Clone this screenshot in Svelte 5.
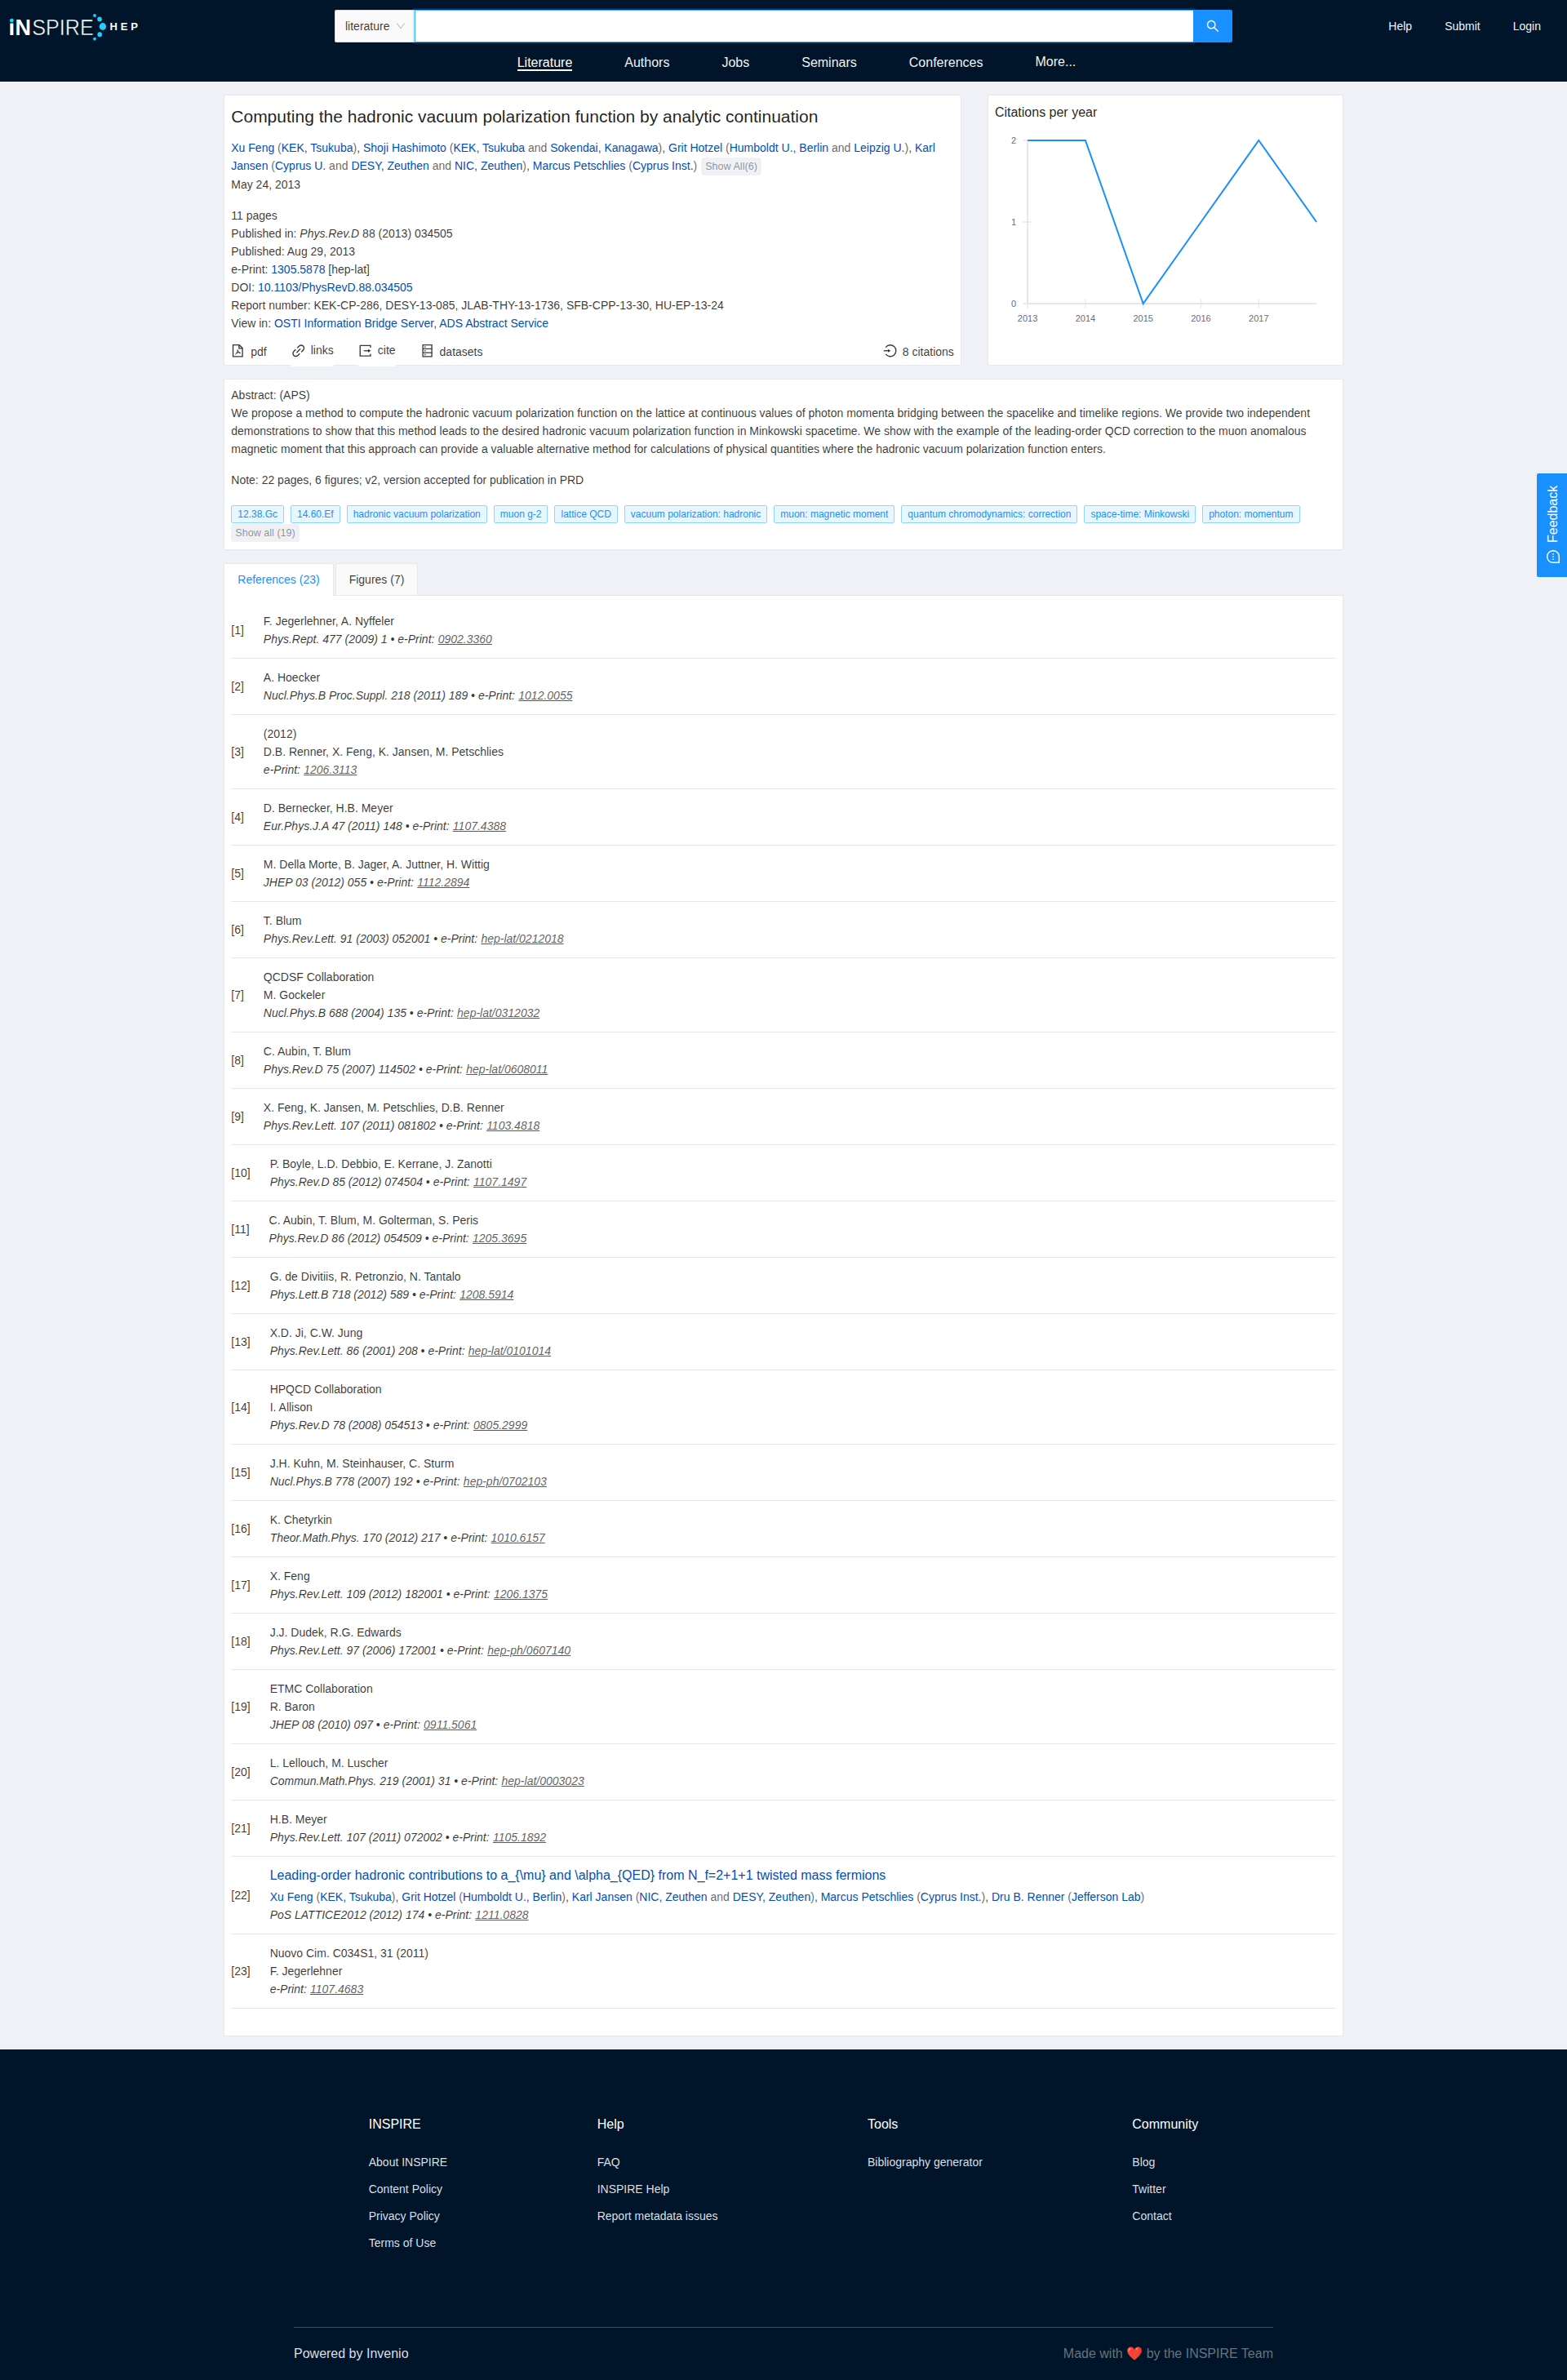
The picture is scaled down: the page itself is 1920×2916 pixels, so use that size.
<script>
  const nav = ['Literature', 'Authors', 'Jobs', 'Seminars', 'Conferences'];
  const account = ['Help', 'Submit', 'Login'];

  const authors = [
    { name: 'Xu Feng', affs: ['KEK, Tsukuba'] },
    { name: 'Shoji Hashimoto', affs: ['KEK, Tsukuba', 'Sokendai, Kanagawa'] },
    { name: 'Grit Hotzel', affs: ['Humboldt U., Berlin', 'Leipzig U.'] },
    { name: 'Karl Jansen', affs: ['Cyprus U.', 'DESY, Zeuthen', 'NIC, Zeuthen'] },
    { name: 'Marcus Petschlies', affs: ['Cyprus Inst.'] }
  ];

  const keywords = [
    '12.38.Gc', '14.60.Ef', 'hadronic vacuum polarization', 'muon g-2', 'lattice QCD',
    'vacuum polarization: hadronic', 'muon: magnetic moment',
    'quantum chromodynamics: correction', 'space-time: Minkowski', 'photon: momentum'
  ];

  const references = [
    { lines: ['F. Jegerlehner, A. Nyffeler'], pub: 'Phys.Rept. 477 (2009) 1', eprint: '0902.3360' },
    { lines: ['A. Hoecker'], pub: 'Nucl.Phys.B Proc.Suppl. 218 (2011) 189', eprint: '1012.0055' },
    { lines: ['(2012)', 'D.B. Renner, X. Feng, K. Jansen, M. Petschlies'], eprint: '1206.3113' },
    { lines: ['D. Bernecker, H.B. Meyer'], pub: 'Eur.Phys.J.A 47 (2011) 148', eprint: '1107.4388' },
    { lines: ['M. Della Morte, B. Jager, A. Juttner, H. Wittig'], pub: 'JHEP 03 (2012) 055', eprint: '1112.2894' },
    { lines: ['T. Blum'], pub: 'Phys.Rev.Lett. 91 (2003) 052001', eprint: 'hep-lat/0212018' },
    { lines: ['QCDSF Collaboration', 'M. Gockeler'], pub: 'Nucl.Phys.B 688 (2004) 135', eprint: 'hep-lat/0312032' },
    { lines: ['C. Aubin, T. Blum'], pub: 'Phys.Rev.D 75 (2007) 114502', eprint: 'hep-lat/0608011' },
    { lines: ['X. Feng, K. Jansen, M. Petschlies, D.B. Renner'], pub: 'Phys.Rev.Lett. 107 (2011) 081802', eprint: '1103.4818' },
    { lines: ['P. Boyle, L.D. Debbio, E. Kerrane, J. Zanotti'], pub: 'Phys.Rev.D 85 (2012) 074504', eprint: '1107.1497' },
    { lines: ['C. Aubin, T. Blum, M. Golterman, S. Peris'], pub: 'Phys.Rev.D 86 (2012) 054509', eprint: '1205.3695' },
    { lines: ['G. de Divitiis, R. Petronzio, N. Tantalo'], pub: 'Phys.Lett.B 718 (2012) 589', eprint: '1208.5914' },
    { lines: ['X.D. Ji, C.W. Jung'], pub: 'Phys.Rev.Lett. 86 (2001) 208', eprint: 'hep-lat/0101014' },
    { lines: ['HPQCD Collaboration', 'I. Allison'], pub: 'Phys.Rev.D 78 (2008) 054513', eprint: '0805.2999' },
    { lines: ['J.H. Kuhn, M. Steinhauser, C. Sturm'], pub: 'Nucl.Phys.B 778 (2007) 192', eprint: 'hep-ph/0702103' },
    { lines: ['K. Chetyrkin'], pub: 'Theor.Math.Phys. 170 (2012) 217', eprint: '1010.6157' },
    { lines: ['X. Feng'], pub: 'Phys.Rev.Lett. 109 (2012) 182001', eprint: '1206.1375' },
    { lines: ['J.J. Dudek, R.G. Edwards'], pub: 'Phys.Rev.Lett. 97 (2006) 172001', eprint: 'hep-ph/0607140' },
    { lines: ['ETMC Collaboration', 'R. Baron'], pub: 'JHEP 08 (2010) 097', eprint: '0911.5061' },
    { lines: ['L. Lellouch, M. Luscher'], pub: 'Commun.Math.Phys. 219 (2001) 31', eprint: 'hep-lat/0003023' },
    { lines: ['H.B. Meyer'], pub: 'Phys.Rev.Lett. 107 (2011) 072002', eprint: '1105.1892' },
    {
      title: 'Leading-order hadronic contributions to a_{\\mu} and \\alpha_{QED} from N_f=2+1+1 twisted mass fermions',
      authors: [
        { name: 'Xu Feng', affs: ['KEK, Tsukuba'] },
        { name: 'Grit Hotzel', affs: ['Humboldt U., Berlin'] },
        { name: 'Karl Jansen', affs: ['NIC, Zeuthen', 'DESY, Zeuthen'] },
        { name: 'Marcus Petschlies', affs: ['Cyprus Inst.'] },
        { name: 'Dru B. Renner', affs: ['Jefferson Lab'] }
      ],
      lines: [],
      pub: 'PoS LATTICE2012 (2012) 174',
      eprint: '1211.0828'
    },
    { lines: ['Nuovo Cim. C034S1, 31 (2011)', 'F. Jegerlehner'], eprint: '1107.4683' }
  ];

  const footer = [
    { title: 'INSPIRE', links: ['About INSPIRE', 'Content Policy', 'Privacy Policy', 'Terms of Use'] },
    { title: 'Help', links: ['FAQ', 'INSPIRE Help', 'Report metadata issues'] },
    { title: 'Tools', links: ['Bibliography generator'] },
    { title: 'Community', links: ['Blog', 'Twitter', 'Contact'] }
  ];

  // Citations chart geometry
  const citations = [2, 2, 0, 1, 2, 1];
  const x0 = 40.1;
  const xStep = 70.8;
  const px = (i) => x0 + i * xStep;
  const py = (v) => 212 - v * 100;
  const linePoints = citations.map((v, i) => `${px(i)},${py(v)}`).join(' ');
</script>

{#snippet authorList(list)}
  {#each list as a, i}{#if i > 0}{', '}{/if}<a class="link" href="#a">{a.name}</a><span class="aff">{' ('}{#each a.affs as aff, j}{#if j > 0}{' and '}{/if}<a class="link" href="#a">{aff}</a>{/each})</span>{/each}
{/snippet}

<div class="page">
  <header>
    <div class="top">
      <svg class="logo" width="160" height="40" viewBox="0 0 160 40">
        <g fill="#fff" font-family="Liberation Sans, Arial, sans-serif">
          <rect x="0.4" y="15.5" width="4" height="14.5" />
          <text x="6.4" y="30" font-size="28" font-weight="700" textLength="19.5" lengthAdjust="spacingAndGlyphs">N</text>
          <text x="27.2" y="30" font-size="28" textLength="75.5" lengthAdjust="spacingAndGlyphs" stroke="#001529" stroke-width="0.5">SPIRE</text>
          <text x="122.5" y="24" font-size="13" font-weight="700" textLength="34.5" lengthAdjust="spacing">HEP</text>
        </g>
        <g fill="#1fd0ff">
          <circle cx="2.4" cy="12.1" r="2.4" fill="#00e5ff" />
          <circle cx="104" cy="6" r="1.9" />
          <ellipse cx="110" cy="10.6" rx="2.8" ry="3" />
          <ellipse cx="113.9" cy="19.5" rx="4.2" ry="4.4" />
          <ellipse cx="110.2" cy="29.2" rx="2.8" ry="3" />
          <circle cx="104" cy="34.6" r="1.9" />
        </g>
      </svg>
      <div class="search">
        <div class="scope">
          <span>literature</span>
          <svg width="12" height="12" viewBox="64 64 896 896" fill="#bfbfbf"><path d="M884 256h-75c-5.1 0-9.900 2.500-12.900 6.600L512 654.200 227.900 262.600c-3-4.100-7.800-6.600-12.900-6.600h-75c-6.500 0-10.300 7.400-6.500 12.700l352.600 486.100c12.800 17.600 39 17.600 51.700 0l352.600-486.100c3.900-5.300.1-12.700-6.400-12.700z" /></svg>
        </div>
        <div class="field"></div>
        <div class="go">
          <svg width="16" height="16" viewBox="64 64 896 896" fill="#fff"><path d="M909.6 854.5L649.9 594.8C690.2 542.7 712 479 712 412c0-80.2-31.3-155.4-87.9-212.1-56.6-56.7-132-87.9-212.1-87.9s-155.5 31.3-212.1 87.9C143.2 256.5 112 331.8 112 412c0 80.1 31.3 155.5 87.9 212.1C256.5 680.8 331.8 712 412 712c67 0 130.6-21.8 182.7-62l259.7 259.6a8.2 8.2 0 0011.6 0l43.6-43.5a8.2 8.2 0 000-11.6zM570.4 570.4C528 612.7 471.8 636 412 636s-116-23.3-158.4-65.6C211.3 528 188 471.8 188 412s23.3-116.1 65.6-158.4C296 211.3 352.2 188 412 188s116.1 23.2 158.4 65.6S636 352.2 636 412s-23.3 116.1-65.6 158.4z" /></svg>
        </div>
      </div>
      <div class="account">
        {#each account as item}<span>{item}</span>{/each}
      </div>
    </div>
    <nav>
      {#each nav as item, i}<span class:active={i === 0}>{item}</span>{/each}
      <span class="more">More...</span>
    </nav>
  </header>

  <main>
    <div class="row">
      <section class="card detail">
        <h2>Computing the hadronic vacuum polarization function by analytic continuation</h2>
        <div class="authors">{@render authorList(authors)} <button class="show">Show All(6)</button></div>
        <div>May 24, 2013</div>
        <div class="meta">
          <div>11 pages</div>
          <div>Published in: <i>Phys.Rev.D</i> 88 (2013) 034505</div>
          <div>Published: Aug 29, 2013</div>
          <div>e-Print: <a class="link" href="#a">1305.5878</a> [hep-lat]</div>
          <div>DOI: <a class="link" href="#a">10.1103/PhysRevD.88.034505</a></div>
          <div>Report number: KEK-CP-286, DESY-13-085, JLAB-THY-13-1736, SFB-CPP-13-30, HU-EP-13-24</div>
          <div>View in: <a class="link" href="#a">OSTI Information Bridge Server</a>, <a class="link" href="#a">ADS Abstract Service</a></div>
        </div>
        <div class="actions">
          <span class="act">
            <svg class="ico" viewBox="0 0 18 18"><path d="M2.6 1.7h7.9l4 4v10.6H2.6z M10.2 1.9v4.1h4.1" /><path d="M8.1 7.6c.9 2.7 1.9 4 4 4.6M8.5 8.2c.1 2.3-1.3 4.4-3.1 5.5M6.4 12.1c1.7-.9 3.3-1.2 5.4-.7" stroke-width="1" /></svg>
            pdf
          </span>
          <span class="act raised">
            <svg class="ico solid" viewBox="64 64 896 896"><path d="M574 665.4a8.03 8.03 0 00-11.3 0L446.5 781.6c-53.8 53.8-144.6 59.5-204 0-59.5-59.5-53.8-150.2 0-204l116.2-116.2c3.1-3.1 3.1-8.2 0-11.3l-39.8-39.8a8.03 8.03 0 00-11.3 0L191.4 526.5c-84.6 84.6-84.6 221.5 0 306s221.5 84.6 306 0l116.2-116.2c3.1-3.1 3.1-8.2 0-11.3L574 665.4zm258.6-474c-84.6-84.6-221.5-84.6-306 0L410.3 307.6a8.03 8.03 0 000 11.3l39.7 39.7c3.1 3.1 8.2 3.1 11.3 0l116.2-116.2c53.8-53.8 144.6-59.5 204 0 59.5 59.5 53.8 150.2 0 204L665.3 562.6a8.03 8.03 0 000 11.3l39.8 39.8c3.1 3.1 8.2 3.1 11.3 0l116.2-116.2c84.5-84.6 84.5-221.5 0-306.1zM610.1 372.3a8.03 8.03 0 00-11.3 0L372.3 598.7a8.03 8.03 0 000 11.3l39.6 39.6c3.1 3.1 8.2 3.1 11.3 0l226.4-226.4c3.1-3.1 3.1-8.2 0-11.3l-39.5-39.6z" /></svg>
            links
          </span>
          <span class="act raised">
            <svg class="ico" viewBox="0 0 18 18"><path d="M15.4 5.2V2.5H2.3v13h13.1v-2.7" /><path d="M7 9h6.5" /><path d="M12.5 6.8L15.7 9l-3.2 2.2z" fill="currentColor" stroke="none" /></svg>
            cite
          </span>
          <span class="act last">
            <svg class="ico" viewBox="0 0 18 18"><path d="M3.2 1.7h11.3v14.6H3.2z M3.2 6.6h11.3 M3.2 11.4h11.3" /><path d="M5.3 4.15h1.4 M5.3 9h1.4 M5.3 13.85h1.4" /></svg>
            datasets
          </span>
          <span class="act cites">
            <svg class="ico" viewBox="0 0 18 18"><path d="M3.3 4.7A7.2 7.2 0 1 1 3.3 13.3" /><path d="M.8 9h6.5" /><path d="M6.3 6.9L9.5 9l-3.2 2.1z" fill="currentColor" stroke="none" /></svg>
            8 citations
          </span>
        </div>
      </section>

      <section class="card chart">
        <h3>Citations per year</h3>
        <svg width="417" height="250" viewBox="0 0 417 250">
          <g stroke="#e6e6e9" stroke-width="2" fill="none">
            <path d="M{x0} 12V212H{px(5)}" />
            {#each [0, 1, 2] as v}<path d="M{x0 - 6} {py(v)}h12" opacity="0.7" />{/each}
            {#each [0, 1, 2, 3, 4] as i}<path d="M{px(i)} 206v12" stroke-width="1.5" opacity="0.8" />{/each}
          </g>
          <g fill="#6b6b76" font-size="11">
            {#each [0, 1, 2] as v}<text x={x0 - 14} y={py(v) + 4} text-anchor="end">{v}</text>{/each}
            {#each [0, 1, 2, 3, 4] as i}<text x={px(i)} y="234" text-anchor="middle">{2013 + i}</text>{/each}
          </g>
          <polyline points={linePoints} fill="none" stroke="#1890ff" stroke-width="2" />
        </svg>
      </section>
    </div>

    <section class="card abstract">
      <div>Abstract: (APS)</div>
      <div>We propose a method to compute the hadronic vacuum polarization function on the lattice at continuous values of photon momenta bridging between the spacelike and timelike regions. We provide two independent demonstrations to show that this method leads to the desired hadronic vacuum polarization function in Minkowski spacetime. We show with the example of the leading-order QCD correction to the muon anomalous magnetic moment that this approach can provide a valuable alternative method for calculations of physical quantities where the hadronic vacuum polarization function enters.</div>
      <div class="note">Note: 22 pages, 6 figures; v2, version accepted for publication in PRD</div>
      <div class="tags">
        {#each keywords as k}<span class="tag">{k}</span>{/each}
      </div>
      <button class="show">Show all (19)</button>
    </section>

    <div class="tabs">
      <div class="tab active">References (23)</div>
      <div class="tab">Figures (7)</div>
    </div>
    <section class="refs">
      {#each references as r, i}
        <div class="ref">
          <span class="num">[{i + 1}]</span>
          <div>
            {#if r.title}<div class="rtitle"><a class="link" href="#a">{r.title}</a></div>{/if}
            {#if r.authors}<div>{@render authorList(r.authors)}</div>{/if}
            {#each r.lines as l}<div>{l}</div>{/each}
            <div class="pub">{#if r.pub}{r.pub + ' • '}{/if}e-Print: <a href="#a">{r.eprint}</a></div>
          </div>
        </div>
      {/each}
    </section>
  </main>

  <footer>
    <div class="cols">
      {#each footer as col}
        <div class="col">
          <h4>{col.title}</h4>
          {#each col.links as l}<div>{l}</div>{/each}
        </div>
      {/each}
    </div>
    <div class="credits">
      <span>Powered by Invenio</span>
      <span class="made">Made with <span class="heart">❤️</span> by the INSPIRE Team</span>
    </div>
  </footer>

  <div class="feedback">
    <div class="feedback-label">
      <svg width="18" height="18" viewBox="0 0 18 18" fill="none" stroke="#fff" stroke-width="1.4"><path d="M1.7 16.3V9A7.3 7.3 0 1 1 9 16.3z" /><path d="M5 9h1.5M8.25 9h1.5M11.5 9h1.5" stroke-width="1.5" /></svg>
      <span>Feedback</span>
    </div>
  </div>
</div>

<style>
  :global(body) {
    background: #f0f1f6;
  }
  .page {
    position: relative;
    font: 14px/22px 'Liberation Sans', Arial, sans-serif;
    color: rgba(0, 0, 0, 0.78);
    overflow: hidden;
  }
  .page :global(*) {
    box-sizing: border-box;
  }
  h2, h3, h4 {
    margin: 0;
    font-weight: 400;
    color: rgba(0, 0, 0, 0.88);
  }
  a {
    text-decoration: none;
  }
  .link {
    color: #0050b3;
  }

  header {
    height: 100px;
    background: #001529;
    color: #f2f3f5;
  }
  .top {
    height: 64px;
    display: grid;
    grid-template-columns: 398px 1100px 1fr;
    align-items: center;
    padding: 0 32px 0 12px;
  }
  .logo {
    margin-top: 2px;
  }
  .search {
    display: flex;
    height: 40px;
  }
  .scope {
    width: 98px;
    display: flex;
    align-items: center;
    justify-content: space-between;
    padding: 0 11px 0 12px;
    background: #fafafa;
    border: 1px solid #d9d9d9;
    border-right: 0;
    border-radius: 2px 0 0 2px;
    color: rgba(0, 0, 0, 0.78);
  }
  .field {
    flex: 1;
    position: relative;
    background: #fff;
    border: 1px solid #40a9ff;
    border-right: 0;
    box-shadow: 0 0 0 2px rgba(24, 144, 255, 0.2);
  }
  .go {
    position: relative;
    width: 48px;
    display: flex;
    align-items: center;
    justify-content: center;
    background: #1890ff;
    border-radius: 0 2px 2px 0;
  }
  .account {
    display: flex;
    justify-content: flex-end;
    gap: 40px;
  }
  nav {
    display: flex;
    justify-content: center;
    gap: 64px;
    padding: 3px 0 0 32px;
    font-size: 16px;
    line-height: 20px;
  }
  nav .active {
    box-shadow: inset 0 -2px #fff;
    color: #fff;
  }
  nav .more {
    margin-top: -1px;
  }

  main {
    width: 1371.43px;
    margin: 0 auto;
    padding: 16px 0;
  }
  .card {
    background: #fff;
    border: 1px solid #e8e8e8;
    border-radius: 2px;
    padding: 8px;
  }
  .row {
    display: grid;
    grid-template-columns: 903.6px 1fr;
    grid-template-rows: 332px;
    gap: 32px;
    margin-bottom: 16px;
  }
  .detail {
    padding: 10px 8px 0;
  }
  h2 {
    font-size: 21px;
    line-height: 32px;
    margin-bottom: 11px;
  }
  .authors {
    height: 45px;
  }
  .aff {
    color: rgba(0, 0, 0, 0.62);
  }
  .show {
    height: 22px;
    margin: 0;
    padding: 0 4px;
    border: 1px solid #f0f1f5;
    border-radius: 3px;
    background: #f0f1f5;
    color: rgba(0, 0, 0, 0.42);
    font: 12.6px/20px 'Liberation Sans', Arial, sans-serif;
    vertical-align: top;
  }
  .authors .show {
    margin: 1px 0 0 1px;
  }
  .meta {
    margin-top: 16px;
  }
  .actions {
    display: flex;
    align-items: flex-start;
    margin-top: 13px;
  }
  .act {
    display: flex;
    gap: 6.5px;
    margin-right: 30px;
  }
  .act.raised {
    line-height: 18px;
    padding-bottom: 10px;
    background: #fff;
  }
  .ico {
    width: 17.5px;
    height: 17.5px;
    margin-top: 1px;
    fill: none;
    stroke: currentColor;
    stroke-width: 1.4;
  }
  .solid {
    fill: currentColor;
    stroke: none;
  }
  .act.last {
    margin-right: 0;
  }
  .act.cites {
    margin: 0 0 0 auto;
  }
  .chart {
    padding-top: 9px;
  }
  h3 {
    font-size: 16px;
    line-height: 24px;
    margin-bottom: 10px;
  }
  .chart svg {
    display: block;
  }

  .abstract {
    height: 210px;
    margin-bottom: 16px;
  }
  .note {
    margin-top: 16px;
  }
  .tags {
    display: flex;
    gap: 8px;
    margin: 20px 0 1px;
  }
  .tag {
    height: 22px;
    padding: 0 7px;
    border: 1px solid #91d5ff;
    border-radius: 2px;
    background: #e6f7ff;
    color: #1890ff;
    font-size: 12px;
    line-height: 20px;
    white-space: nowrap;
  }

  .tabs {
    display: flex;
    gap: 2px;
    position: relative;
  }
  .tab {
    height: 40px;
    padding: 0 16px;
    background: #fafafa;
    border: 1px solid #e8e8e8;
    border-radius: 2px 2px 0 0;
    line-height: 38px;
  }
  .tab.active {
    background: #fff;
    border-bottom-color: #fff;
    color: #1890ff;
  }
  .refs {
    margin-top: -1px;
    padding: 8px 8px 33px;
    background: #fff;
    border: 1px solid #e8e8e8;
  }
  .ref {
    display: flex;
    align-items: center;
    gap: 24px;
    padding: 12px 0;
    border-bottom: 1px solid #e8e8e8;
  }
  .rtitle {
    font-size: 16px;
    margin-bottom: 4px;
  }
  .pub {
    font-style: italic;
  }
  .pub a {
    margin-left: 0.4px;
    color: rgba(0, 0, 0, 0.65);
    text-decoration: underline;
  }

  footer {
    height: 405px;
    padding: 80px 360px 0;
    background: #001529;
    color: #dcdfe2;
  }
  .cols {
    display: flex;
    justify-content: space-around;
    height: 260px;
  }
  h4 {
    font-size: 16px;
    line-height: 24px;
    margin-bottom: 23px;
    color: #fff;
  }
  .col div {
    margin-bottom: 11px;
  }
  .credits {
    display: flex;
    justify-content: space-between;
    padding-top: 20px;
    border-top: 1px solid #404f5e;
    font-size: 16px;
    line-height: 24px;
  }
  .made {
    color: #66737f;
  }

  .feedback {
    position: absolute;
    top: 580px;
    right: 0;
    width: 37px;
    height: 127px;
    background: #1890ff;
    border-radius: 2px 0 0 2px;
  }
  .feedback-label {
    width: 127px;
    height: 37px;
    display: flex;
    align-items: center;
    gap: 8px;
    padding: 3px 0 0 16px;
    color: #fff;
    font-size: 16px;
    transform: translateY(127px) rotate(-90deg);
    transform-origin: 0 0;
  }
</style>
